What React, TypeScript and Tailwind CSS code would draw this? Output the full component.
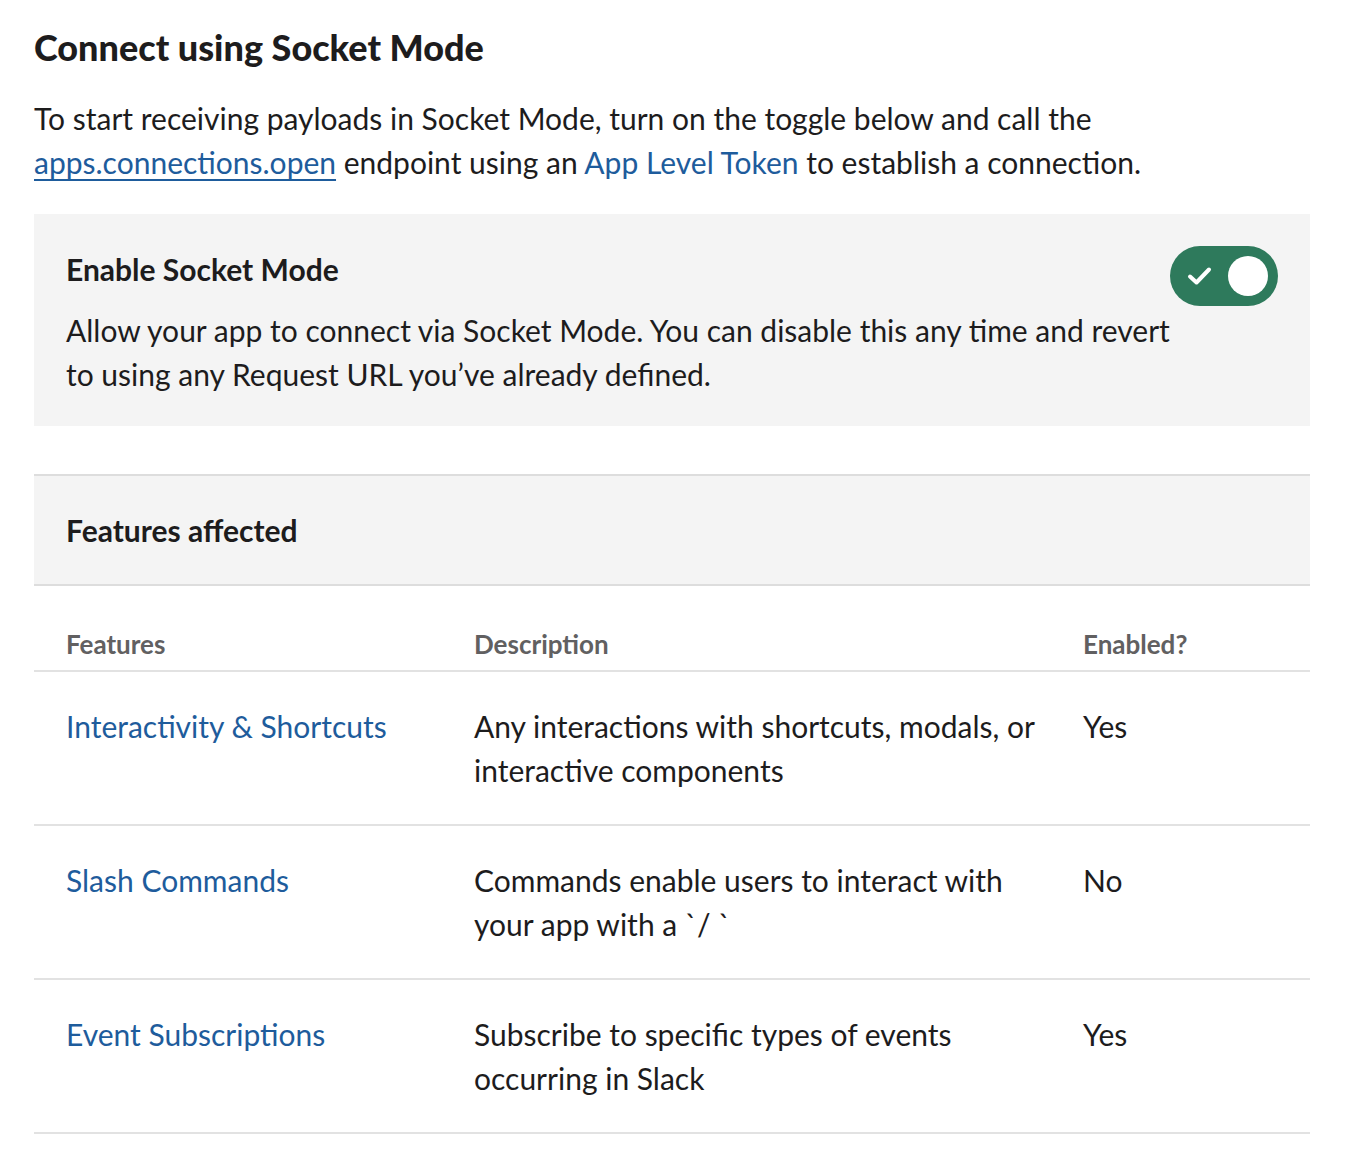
import React from "react";

const rows = [
  {
    name: "Interactivity & Shortcuts",
    desc: "Any interactions with shortcuts, modals, or interactive components",
    enabled: "Yes",
  },
  {
    name: "Slash Commands",
    desc: "Commands enable users to interact with your app with a `/ `",
    enabled: "No",
  },
  {
    name: "Event Subscriptions",
    desc: "Subscribe to specific types of events occurring in Slack",
    enabled: "Yes",
  },
];

export default function App() {
  return (
    <div
      className="min-h-[1166px] bg-white text-[#1d1c1d] px-[34px] pt-[24px]"
      style={{ fontFamily: "Lato, 'Noto Sans', sans-serif" }}
    >
      <div className="w-[1276px]">
        <h1 className="text-[36px] leading-[46px] font-black">Connect using Socket Mode</h1>
        <p className="mt-[26px] text-[30px] leading-[44px]">
          To start receiving payloads in Socket Mode, turn on the toggle below and call the{" "}
          <a className="text-[#1e5c9c] underline underline-offset-[5px] decoration-2">apps.connections.open</a>{" "}
          endpoint using an <a className="text-[#1e5c9c]">App Level Token</a> to establish a connection.
        </p>

        <div className="mt-[30px] bg-[#f4f4f4] px-[32px] pt-[32px] pb-[30px] flex justify-between">
          <div className="w-[1110px]">
            <div className="text-[30px] leading-[46px] font-bold">Enable Socket Mode</div>
            <p className="mt-[16px] text-[30px] leading-[44px]">
              Allow your app to connect via Socket Mode. You can disable this any time and revert to using any Request URL you’ve already defined.
            </p>
          </div>
          <div className="w-[108px] h-[60px] rounded-full bg-[#2e7a5c] flex items-center justify-between pl-[17px] pr-[10px] shrink-0">
            <svg width="26" height="22" viewBox="0 0 26 22" fill="none">
              <path d="M3 11.5 L9.5 17.5 L22 4.5" stroke="white" strokeWidth="4" strokeLinecap="round" strokeLinejoin="round" />
            </svg>
            <div className="w-[40px] h-[40px] rounded-full bg-white" />
          </div>
        </div>

        <div className="mt-[48px] border-y-2 border-[#dddddd] bg-[#f4f4f4] px-[32px] h-[112px] flex items-center">
          <div className="text-[30px] font-bold">Features affected</div>
        </div>

        <table className="w-full border-collapse">
          <thead>
            <tr className="border-b-2 border-[#e2e2e2]">
              <th className="text-left font-bold text-[#616061] text-[26px] leading-[36px] pl-[32px] pt-[40px] pb-[8px] w-[440px]">Features</th>
              <th className="text-left font-bold text-[#616061] text-[26px] leading-[36px] pt-[40px] pb-[8px] w-[609px]">Description</th>
              <th className="text-left font-bold text-[#616061] text-[26px] leading-[36px] pt-[40px] pb-[8px]">Enabled?</th>
            </tr>
          </thead>
          <tbody>
            {rows.map((r) => (
              <tr key={r.name} className="border-b-2 border-[#e2e2e2] align-top">
                <td className="pl-[32px] py-[32px] text-[30px] leading-[44px] text-[#1e5c9c]">{r.name}</td>
                <td className="py-[32px] pr-[40px] text-[30px] leading-[44px]">{r.desc}</td>
                <td className="py-[32px] text-[30px] leading-[44px]">{r.enabled}</td>
              </tr>
            ))}
          </tbody>
        </table>
      </div>
    </div>
  );
}
